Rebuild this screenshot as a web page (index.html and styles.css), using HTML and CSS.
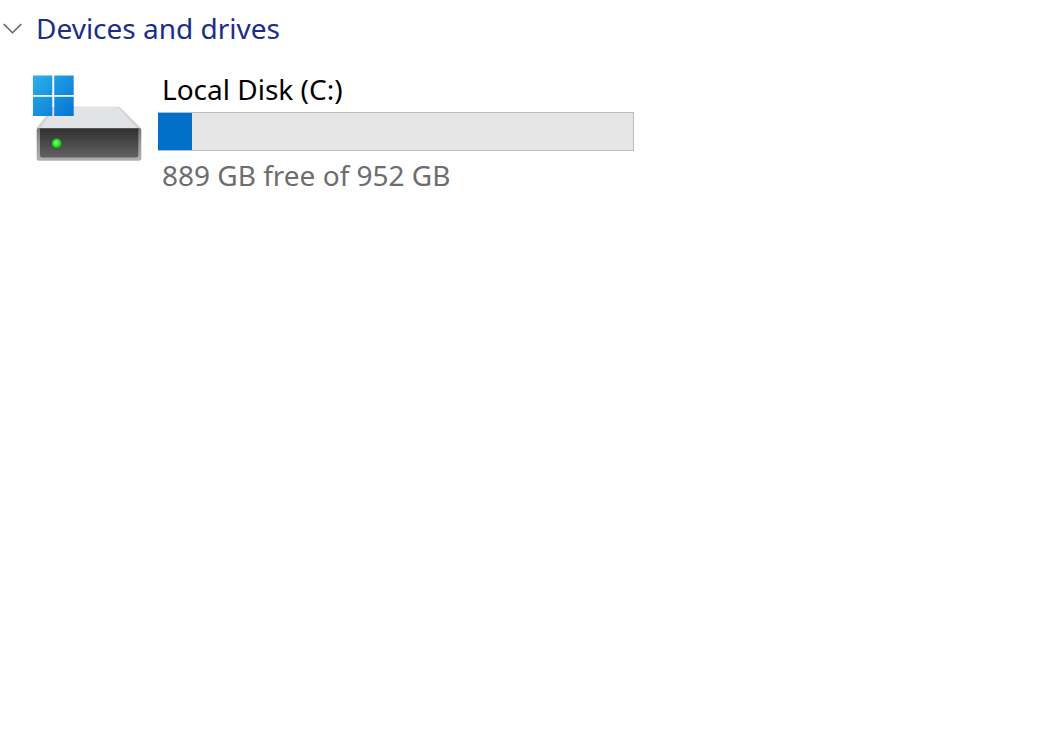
FILE: index.html
```html
<!DOCTYPE html>
<html lang="en">
<head>
<meta charset="utf-8">
<meta name="viewport" content="width=device-width, initial-scale=1">
<title>Devices and drives</title>
<link rel="stylesheet" href="styles.css">
</head>
<body>
<main class="group">
  <h1 class="group-title">
    <button class="group-toggle" type="button" aria-expanded="true">
      <svg class="chevron" viewBox="0 0 20 12" aria-hidden="true"><path d="M1.700 2 10.500 10.800 19.300 2"/></svg>
      <span>Devices and drives</span>
    </button>
  </h1>
  <section class="drive" aria-labelledby="drive-name">
    <svg class="drive-icon" viewBox="0 0 110 88" aria-hidden="true">
      <defs>
        <linearGradient id="logo" gradientUnits="userSpaceOnUse" x1="1" y1="1" x2="42" y2="42">
          <stop offset="0" stop-color="#2bb1ec"/><stop offset="1" stop-color="#0473d2"/>
        </linearGradient>
        <linearGradient id="face" x1="0" y1="0" x2="0" y2="1">
          <stop offset="0" stop-color="#303030"/><stop offset="1" stop-color="#626262"/>
        </linearGradient>
        <linearGradient id="rim" x1="0" y1="0" x2="0" y2="1">
          <stop offset="0" stop-color="#747474"/><stop offset=".4" stop-color="#939393"/><stop offset="1" stop-color="#b0b0b0"/>
        </linearGradient>
        <radialGradient id="led" cx=".45" cy=".45" r=".6">
          <stop offset="0" stop-color="#98ff8c"/><stop offset=".5" stop-color="#2be82b"/><stop offset="1" stop-color="#08b80c"/>
        </radialGradient>
      </defs>
      <path d="M21 32.700h65q1.500 0 2.500 1L108.500 53.500V57H5v-3.500z" fill="#d3d3d6"/>
      <path d="M24 32.700h61.500L105.500 54.500H8z" fill="#e2e3e7"/>
      <path d="M7 54h100q2.300 0 2.300 2v28.300q0 2.500-2.500 2.500H7.200Q4.700 86.800 4.700 84.300V56q0-2 2.300-2z" fill="url(#rim)"/>
      <path d="M8 54.500h98.300v26.500q0 2.500-2.500 2.500H10.500Q8 83.500 8 81z" fill="url(#face)"/>
      <circle cx="24.700" cy="69.400" r="4.900" fill="url(#led)" stroke="#216d22" stroke-width=".5"/>
      <path d="M1 1.500h19.300v19.500H1zM22.200 1.500h19.500v19.500H22.200zM1 22.800h19.300v19.200H1zM22.200 22.800h19.500v19.200H22.200z" fill="url(#logo)"/>
    </svg>
    <div class="drive-info">
      <h2 class="drive-name" id="drive-name">Local Disk (C:)</h2>
      <div class="usage" role="meter" aria-label="Used space" aria-valuemin="0" aria-valuemax="952" aria-valuenow="63">
        <div class="usage-fill" style="width: 7.2%"></div>
      </div>
      <p class="drive-space">889 GB free of 952 GB</p>
    </div>
  </section>
</main>
</body>
</html>
```
FILE: styles.css
```css
* {
  box-sizing: border-box;
}

body {
  margin: 0;
  background: #fff;
  color: #000;
  font-family: "Segoe UI", "Noto Sans", "Open Sans", sans-serif;
  font-size: 28px;
  line-height: 40px;
}

.group {
  padding: 8px 2px;
}

.group-title,
.drive-name,
.drive-space {
  margin: 0;
  font-size: inherit;
  font-weight: 400;
}

.group-toggle {
  display: flex;
  align-items: center;
  gap: 14px;
  padding: 0;
  border: 0;
  background: none;
  color: #1b2e87;
  font: inherit;
}

.chevron {
  width: 20px;
  height: 12px;
  fill: none;
  stroke: #626262;
  stroke-width: 1.5;
}

.drive {
  display: flex;
  align-items: flex-start;
  gap: 16px;
  padding: 21px 0 0 30px;
}

.drive-icon {
  flex: none;
  width: 110px;
  height: 88px;
  margin-top: 5px;
}

.drive-info {
  flex: 1;
  min-width: 0;
  max-width: 476px;
}

.drive-name,
.drive-space {
  padding-left: 4px;
}

.drive-name {
  padding-bottom: 3px;
}

.usage {
  height: 39px;
  border: 1px solid #bcbcbc;
  border-left: 0;
  background: #e6e6e6;
}

.usage-fill {
  height: 100%;
  background: #0070cb;
}

.drive-space {
  padding-top: 4px;
  color: #6d6d6d;
}
```
